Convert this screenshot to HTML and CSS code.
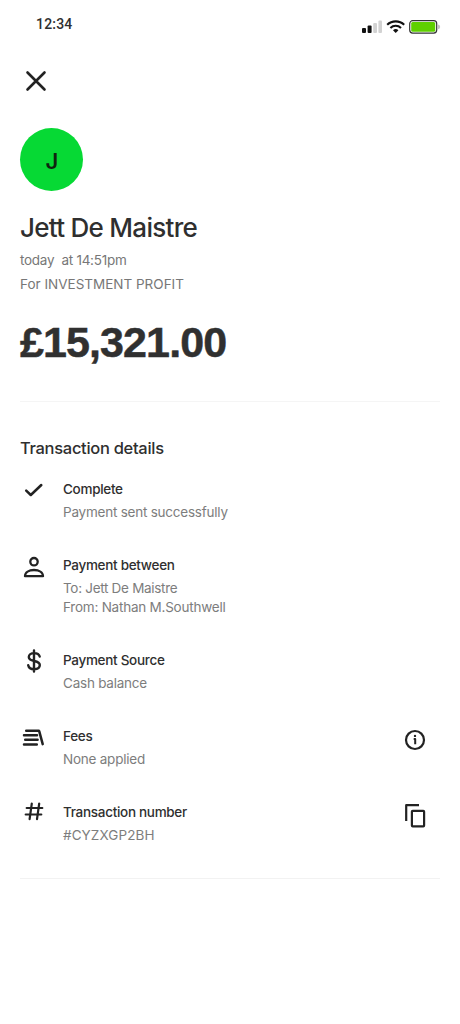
FILE: index.html
```html
<!DOCTYPE html>
<html lang="en">
<head>
<meta charset="utf-8">
<title>Transaction</title>
<link rel="stylesheet" href="styles.css">
</head>
<body>
<header class="status">
  <span class="time">12:34</span>
  <svg class="indicators" width="80" height="16" viewBox="0 0 80 16">
    <g fill="#111"><rect x="1" y="9" width="4" height="5" rx="1"/><rect x="6.6" y="6.4" width="4" height="7.6" rx="1"/></g>
    <g fill="#d2d2d2"><rect x="12.2" y="4" width="3.8" height="10" rx="1"/><rect x="17.4" y="1.5" width="3.6" height="12.5" rx="1"/></g>
    <g fill="none" stroke="#111" stroke-width="2.1"><path d="M26.2 5.8a12.3 12.3 0 0 1 17 0"/><path d="M29.4 8.9a7.7 7.7 0 0 1 10.6 0"/></g>
    <path d="M34.7 14l-2.7-2.7a4 4 0 0 1 5.4 0z" fill="#111"/>
    <rect x="48.7" y="1.7" width="27" height="12.4" rx="3" fill="#fff" stroke="#333" stroke-width="1.2"/>
    <rect x="50.2" y="3.1" width="24" height="9.6" rx="1.5" fill="#5fd000"/>
    <path d="M77 5.5q2.2.4 2.2 2.4t-2.2 2.4z" fill="#c4c4c4"/>
  </svg>
</header>
<main class="page">
  <svg class="close" width="24" height="24" viewBox="0 0 24 24"><path d="M3.500 3.500l17 17M20.500 3.500l-17 17"/></svg>
  <div class="avatar">J</div>
  <h1 class="name">Jett De Maistre</h1>
  <p class="meta date">today&nbsp; at 14:51pm</p>
  <p class="meta purpose">For INVESTMENT PROFIT</p>
  <p class="amount">£15,321.00</p>
  <section class="details">
    <h2 class="heading">Transaction details</h2>
    <div class="row">
      <svg class="icon" width="26" height="26" viewBox="0 0 26 26"><path d="M5.200 12.600l4.600 4.400L20.300 7" stroke-width="2.500"/></svg>
      <div class="text"><h3 class="title">Complete</h3><p class="desc">Payment sent successfully</p></div>
    </div>
    <div class="row">
      <svg class="icon" width="26" height="26" viewBox="0 0 26 26"><circle cx="13" cy="7.700" r="3.700"/><path d="M4 22.200c0-4 4-6.200 9-6.200s9 2.200 9 6.200z"/></svg>
      <div class="text"><h3 class="title">Payment between</h3><p class="desc payee">To: Jett De Maistre</p><p class="desc">From: Nathan M.Southwell</p></div>
    </div>
    <div class="row">
      <svg class="icon" width="26" height="26" viewBox="0 0 26 26"><path d="M13 1.500v21M18.700 7.500c-.6-2.300-2.600-3.400-5.500-3.400-3.200 0-5.400 1.400-5.400 3.900 0 2.700 2.600 3.400 5.300 4 3.100.6 5.700 1.300 5.700 4.100 0 2.600-2.400 4.100-5.600 4.100-3.200 0-5.500-1.500-6-4" stroke-width="2.400"/></svg>
      <div class="text"><h3 class="title">Payment Source</h3><p class="desc">Cash balance</p></div>
    </div>
    <div class="row">
      <svg class="icon" width="26" height="26" viewBox="0 0 26 26"><path d="M5.200 5.700h12.600M3 10.200h13M4.200 14.800h12.400M3 19.400h12.800M18.200 6.200l3.500 12.900" stroke-width="2.500"/></svg>
      <div class="text"><h3 class="title">Fees</h3><p class="desc">None applied</p></div>
      <svg class="action info" width="24" height="24" viewBox="0 0 24 24"><circle cx="12" cy="12" r="9"/><path d="M10.700 11h1.500v5.200" stroke-width="2"/><circle class="dot" cx="12" cy="7.900" r="1.200"/></svg>
    </div>
    <div class="row">
      <svg class="icon" width="26" height="26" viewBox="0 0 26 26"><path d="M10.800 2.500l-2.200 15.600M18.200 2.500L16 18.100M5.700 7h15.600M4.700 13.500h15.600" stroke-width="2.200"/></svg>
      <div class="text"><h3 class="title">Transaction number</h3><p class="desc code">#CYZXGP2BH</p></div>
      <svg class="action copy" width="24" height="26" viewBox="0 0 24 26"><path d="M3.200 18V2.200H16"/><rect x="8.900" y="7.800" width="12.200" height="15.500" rx=".8"/></svg>
    </div>
  </section>
</main>
</body>
</html>
```
FILE: styles.css
```css
* { box-sizing: border-box; margin: 0; padding: 0; }
body {
  height: 1024px;
  background: #fff;
  color: #2f2f2f;
  font-family: Inter, "Liberation Sans", sans-serif;
  font-size: 14px;
  font-weight: 500;
}
h1, h2, h3 { white-space: nowrap; }
svg { display: block; flex: none; fill: none; }
.status { display: flex; justify-content: space-between; height: 60px; padding: 14px 19px 0 36px; }
.time { font-family: Roboto, sans-serif; font-size: 14px; line-height: 20px; letter-spacing: .2px; }
.indicators { margin-top: 5px; }
.page { padding: 9px 20px 0; }
.close { margin-left: 4px; stroke: #222; stroke-width: 2.6; stroke-linecap: round; }
.avatar {
  display: flex; align-items: center; justify-content: center;
  width: 63px; height: 63px; margin-top: 35px; padding: 3px 0 0 1px;
  border-radius: 50%; background: #06d934; color: #10240f;
  font-size: 22px; font-weight: 600;
}
.name { margin-top: 20px; font-size: 26px; line-height: 34px; font-weight: 550; letter-spacing: -.72px; }
.meta { font-size: 13.5px; font-weight: 400; line-height: 24px; color: #777; white-space: nowrap; }
.date { margin-top: 3px; letter-spacing: -.26px; }
.amount { margin-top: 21px; font-family: "Liberation Sans", Arial, sans-serif; font-size: 43px; line-height: 50px; font-weight: 700; letter-spacing: -.9px; color: #303030; -webkit-text-stroke: .5px #303030; }
.details { margin-top: 34px; padding-top: 34px; padding-bottom: 33px; border-top: 1px solid #f5f5f5; border-bottom: 1px solid #f2f2f2; }
.heading { font-size: 16.5px; font-weight: 550; line-height: 24px; margin-bottom: 19px; letter-spacing: -.3px; }
.row { display: flex; margin-bottom: 33px; }
.row:last-child { margin-bottom: 0; }
.icon { margin: -1.5px 17px 0 1px; stroke: #222; stroke-width: 2.3; stroke-linecap: round; stroke-linejoin: round; }
.text { flex: 1; margin-left: -1px; }
.title { font-size: 13.5px; font-weight: 550; line-height: 20px; margin-bottom: 4px; letter-spacing: -.3px; }
.desc { font-size: 13.5px; font-weight: 400; line-height: 19px; color: #7d7d7d; letter-spacing: -.23px; white-space: nowrap; }
.payee { letter-spacing: -.3px; }
.code { letter-spacing: .1px; }
.action { stroke: #222; stroke-width: 2.2; stroke-linejoin: round; }
.action .dot { fill: #222; stroke: none; }
.info { margin: 1.5px 13.5px 0 0; }
.copy { margin: 1px 13px 0 0; }
```
